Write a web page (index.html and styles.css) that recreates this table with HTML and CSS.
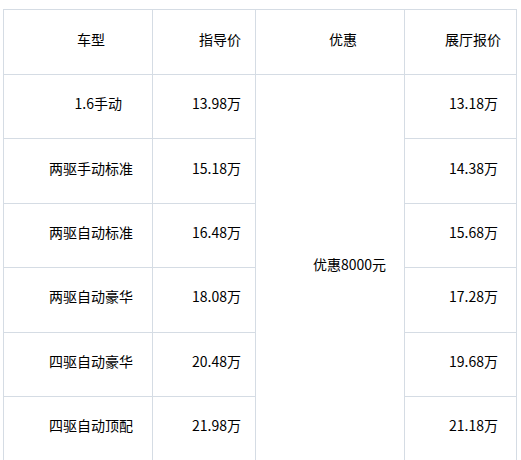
FILE: index.html
```html
<!DOCTYPE html>
<html lang="zh-CN">
<head>
<meta charset="utf-8">
<title>车型报价</title>
<link rel="stylesheet" href="styles.css">
</head>
<body>
<table class="price-table">
  <colgroup>
    <col class="c-model">
    <col class="c-guide">
    <col class="c-promo">
    <col class="c-show">
  </colgroup>
  <tr class="head-row">
    <td class="model pad-wide">车型</td>
    <td class="guide">指导价</td>
    <td class="promo pad-wide">优惠</td>
    <td class="show head-show">展厅报价</td>
  </tr>
  <tr class="row">
    <td class="model pad-mid">1.6手动</td>
    <td class="guide">13.98万</td>
    <td class="promo promo-body" rowspan="6">优惠8000元</td>
    <td class="show">13.18万</td>
  </tr>
  <tr class="row">
    <td class="model">两驱手动标准</td>
    <td class="guide">15.18万</td>
    <td class="show">14.38万</td>
  </tr>
  <tr class="row">
    <td class="model">两驱自动标准</td>
    <td class="guide">16.48万</td>
    <td class="show">15.68万</td>
  </tr>
  <tr class="row">
    <td class="model">两驱自动豪华</td>
    <td class="guide">18.08万</td>
    <td class="show">17.28万</td>
  </tr>
  <tr class="row">
    <td class="model">四驱自动豪华</td>
    <td class="guide">20.48万</td>
    <td class="show">19.68万</td>
  </tr>
  <tr class="row">
    <td class="model">四驱自动顶配</td>
    <td class="guide">21.98万</td>
    <td class="show">21.18万</td>
  </tr>
</table>
</body>
</html>
```

FILE: styles.css
```css
html, body {
  margin: 0;
  background: #ffffff;
}

body {
  padding: 9px 0 0 3px;
  font-family: "Noto Sans CJK SC", "Noto Sans", sans-serif;
  font-size: 14px;
  color: #000000;
}

.price-table {
  border-collapse: collapse;
  table-layout: fixed;
  width: 513px;
  border: 1px solid #d5dce4;
}

.c-model { width: 149px; }
.c-guide { width: 103px; }
.c-promo { width: 149px; }
.c-show { width: 112px; }

.price-table td {
  border: 1px solid #d5dce4;
  text-align: right;
  vertical-align: middle;
  padding: 0 0 7px 0;
  line-height: 18px;
  white-space: nowrap;
}

.head-row { height: 65px; }
.row { height: 64.4px; }

.model { padding-right: 19px !important; }
.guide { padding-right: 14px !important; }
.promo { padding-right: 18px !important; }
.show { padding-right: 18px !important; }

.model.pad-wide { padding-right: 47px !important; }
.model.pad-mid { padding-right: 30px !important; }
.promo.pad-wide { padding-right: 47px !important; }
.show.head-show { padding-right: 15px !important; }
```
